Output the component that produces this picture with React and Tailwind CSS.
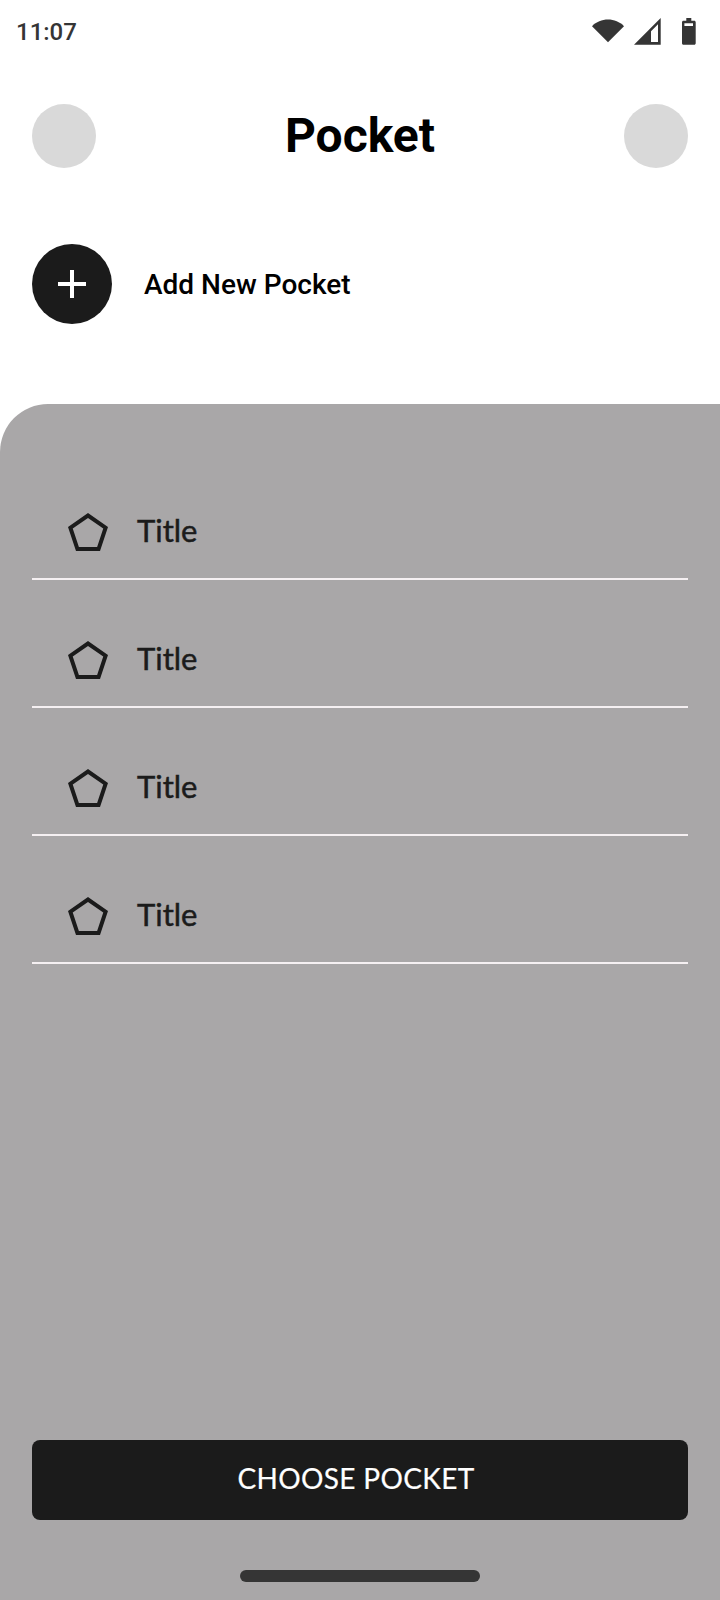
const pockets = ["Title", "Title", "Title", "Title"];

function StatusBar() {
  return (
    <div className="flex h-16 shrink-0 items-center justify-between pl-4 pr-6 text-[#353535]">
      <span className="text-2xl font-medium leading-8">11:07</span>
      <div className="flex h-16 items-start">
        <svg width="32" height="24" viewBox="0 0 32 24" className="mt-[19px] mr-[10px]" fill="currentColor" aria-hidden="true">
          <path d="M0 7.2C4.3 3 9.9.6 16 .6S27.7 3 32 7.2L16 23.2Z" />
        </svg>
        <svg width="27" height="28" viewBox="0 0 27 28" className="mt-[17px] mr-[21px]" fill="currentColor" fillRule="evenodd" aria-hidden="true">
          <path d="M0 27.7 26.7 1v26.7ZM17 14.3V25h7V7.3Z" />
        </svg>
        <svg width="14" height="28" viewBox="0 0 14 28" className="mt-[17px]" fill="currentColor" fillRule="evenodd" aria-hidden="true">
          <path d="M4.3 1h5v2.7h2.9c.9 0 1.5.6 1.5 1.5v21c0 .9-.6 1.5-1.5 1.5H1.5C.6 27.7 0 27.1 0 26.2v-21c0-.9.6-1.5 1.5-1.5h2.8ZM2.4 6.3v2.7h8.6V6.3Z" />
        </svg>
      </div>
    </div>
  );
}

function PentagonIcon() {
  return (
    <svg width="48" height="48" viewBox="0 0 24 24" fill="currentColor" aria-hidden="true">
      <path d="M19.63 9.78 16.56 19H7.44L4.37 9.78 12 4.44l7.63 5.34zM2 9l4 12h12l4-12-10-7L2 9z" />
    </svg>
  );
}

export default function App() {
  return (
    <div className="flex h-[1600px] w-[720px] flex-col overflow-hidden bg-white font-['Roboto',sans-serif]">
      <StatusBar />
      <header className="mt-10 flex h-16 shrink-0 items-center justify-between px-8">
        <div className="size-16 rounded-full bg-[#d9d9d9]" />
        <h1 className="text-5xl font-bold text-black">Pocket</h1>
        <div className="size-16 rounded-full bg-[#d9d9d9]" />
      </header>
      <div className="mt-[76px] flex h-20 shrink-0 items-center gap-8 px-8">
        <button className="flex size-20 items-center justify-center rounded-full bg-[#1b1b1b] text-white" aria-label="Add">
          <svg width="28" height="28" viewBox="0 0 28 28" fill="currentColor" aria-hidden="true">
            <path d="M12 0h4v12h12v4H16v12h-4V16H0v-4h12z" />
          </svg>
        </button>
        <span className="pt-0.5 text-[28px] font-medium leading-8 text-black">Add New Pocket</span>
      </div>
      <main className="mt-20 flex flex-1 flex-col rounded-tl-[48px] bg-[#a9a7a8] px-8 pt-12">
        <ul>
          {pockets.map((title, i) => (
            <li key={i} className="flex h-32 items-end border-b-2 border-[#f5f0f2] pb-[21px] pl-8 text-[#1b1b1b]">
              <PentagonIcon />
              <span className="ml-[25px] pb-[7px] font-['Lato',sans-serif] text-[31px] leading-10 [-webkit-text-stroke:0.5px_#1b1b1b]">{title}</span>
            </li>
          ))}
        </ul>
        <button className="mt-auto flex h-20 items-center justify-center rounded-lg bg-[#1b1b1b] pb-1 pr-2 font-['Lato',sans-serif] text-[28px] tracking-[0.35px] text-white [-webkit-text-stroke:0.2px_#ffffff]">
          CHOOSE POCKET
        </button>
        <div className="mb-[18px] mt-[50px] h-3 w-60 shrink-0 self-center rounded-full bg-[#353535]" />
      </main>
    </div>
  );
}
